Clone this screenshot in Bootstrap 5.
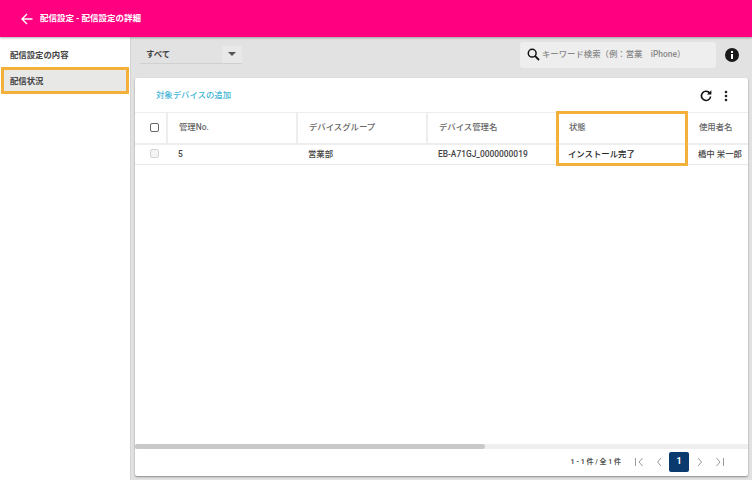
<!DOCTYPE html>
<html lang="ja">
<head>
<meta charset="UTF-8">
<title>配信設定の詳細</title>
<link href="https://cdn.jsdelivr.net/npm/bootstrap@5.3.3/dist/css/bootstrap.min.css" rel="stylesheet">
<style>
html, body { height: 480px; overflow: hidden; }
body { font-family: Roboto, "Noto Sans CJK JP", sans-serif; font-size: 8.4px; color: #333; background: #e2e2e2; }
.top-bar { height: 37px; background: #ff0080; color: #fff; font-weight: 700; font-size: 8.5px; box-shadow: 0 1px 2px rgba(0,0,0,.3); padding-left: 21px; position: relative; z-index: 2; }
.back-arrow { margin-right: 7px; }
.page-body { height: 443px; }
.side-menu { width: 131px; background: #fff; border-right: 1px solid #d4d4d4; flex: none; padding: 0 1px; }
.side-item { height: 27px; display: flex; align-items: center; padding-left: 9px; font-weight: 700; color: #444; }
.side-item.first { height: 30px; padding-top: 6px; }
.side-item.active-item { background: #e8e8e6; outline: 3px solid #f3b13c; outline-offset: -3px; width: 128px; padding-top: 1px; }
.main-area { flex: 1; min-width: 0; background: #e2e2e2; padding-right: 4px; padding-left: 4px; }
.filter-row { height: 41px; padding-bottom: 6px; }
.select-box { width: 102px; height: 18px; margin-left: 5px; padding-left: 6px; border-bottom: 1px solid #d0d0d0; font-weight: 700; color: #444; }
.select-arrow { width: 20px; height: 17px; background: #e8e8e8; }
.caret-shape { width: 0; height: 0; border-left: 4px solid transparent; border-right: 4px solid transparent; border-top: 4px solid #555; }
.search-box { width: 196px; height: 26px; background: #eeeeee; border-radius: 3px; color: #888; font-weight: 500; padding-left: 7px; gap: 2px; }
.info-btn { margin: 0 9px; width: 14px; height: 14px; }
.panel-box { height: 398px; background: #fff; border-radius: 2px; box-shadow: 0 1px 2px rgba(0,0,0,.4); position: relative; overflow: hidden; }
.panel-tools { height: 34px; padding-left: 21px; padding-right: 20px; padding-top: 1px; color: #3fb5d6; font-weight: 500; }
.tool-icons { gap: 12px; }
.grid-wrap { height: 332px; overflow: hidden; border-top: 1px solid #eee; }
.data-grid { width: 690px; table-layout: fixed; border-collapse: collapse; }
.data-grid th { height: 31px; font-weight: 500; color: #666; padding: 0 0 2px 11px; border-right: 2px solid #eee; border-bottom: 2px solid #eee; }
.data-grid td { height: 20px; font-weight: 500; color: #444; padding: 0 0 0 11px; border-bottom: 1px solid #e8e8e8; }
.data-grid th:last-child { border-right: 0; }
.data-grid .check-col { padding: 0 0 2px 15px; }
.box-check { display: block; width: 9px; height: 9px; border: 1px solid #666; border-radius: 2px; background: #fff; }
.box-check.muted-check { border-color: #d4d4d4; background: #f4f4f4; }
.status-cell { color: #222 !important; }
.scroll-track { height: 5px; background: #efefef; }
.scroll-thumb { width: 350px; height: 5px; background: #c9c9c9; border-radius: 3px; }
.panel-foot { height: 26px; font-size: 7px; font-weight: 700; color: #555; padding-right: 18px; }
.page-icon { width: 20px; height: 20px; display: flex; align-items: center; justify-content: center; }
.page-now { width: 20px; height: 20px; background: #0b3a6e; color: #fff; border-radius: 2px; font-size: 9px; font-weight: 700; display: flex; align-items: center; justify-content: center; margin: 0 1px 0 0; }
.mark-frame { position: absolute; left: 421px; top: 33px; width: 132px; height: 55px; border: 3px solid #f3b13c; pointer-events: none; }
</style>
</head>
<body>
<div class="top-bar d-flex align-items-center">
  <svg class="back-arrow" width="12" height="12" viewBox="0 0 12 12"><path d="M11.5 6H1.5M6 1L1 6l5 5" fill="none" stroke="#fff" stroke-width="1.4"/></svg>
  <span>配信設定 - 配信設定の詳細</span>
</div>
<div class="page-body d-flex">
  <div class="side-menu">
    <div class="side-item first">配信設定の内容</div>
    <div class="side-item active-item">配信状況</div>
  </div>
  <div class="main-area">
    <div class="filter-row d-flex align-items-center">
      <div class="select-box d-flex align-items-center justify-content-between">
        <span>すべて</span>
        <span class="select-arrow d-flex align-items-center justify-content-center"><span class="caret-shape"></span></span>
      </div>
      <div class="search-box d-flex align-items-center ms-auto">
        <svg width="13" height="13" viewBox="0 0 13 13"><circle cx="5.2" cy="5.2" r="3.9" fill="none" stroke="#111" stroke-width="1.5"/><path d="M8.2 8.2L12 12" stroke="#111" stroke-width="1.8"/></svg>
        <span>キーワード検索（例：営業　iPhone）</span>
      </div>
      <svg class="info-btn" viewBox="0 0 14 14"><circle cx="7" cy="7" r="7" fill="#1a1a1a"/><rect x="6" y="6" width="2" height="5" fill="#fff"/><rect x="6" y="3" width="2" height="2" fill="#fff"/></svg>
    </div>
    <div class="panel-box">
      <div class="panel-tools d-flex align-items-center justify-content-between">
        <span>対象デバイスの追加</span>
        <div class="tool-icons d-flex align-items-center">
          <svg width="12" height="12" viewBox="0 0 12 12"><path d="M9.8 3.2A4.6 4.6 0 1 0 10.6 6.5" fill="none" stroke="#111" stroke-width="1.6"/><path d="M7 4.6h4.4V.2z" fill="#111"/></svg>
          <svg width="4" height="12" viewBox="0 0 4 12"><circle cx="2" cy="2" r="1.3" fill="#222"/><circle cx="2" cy="6" r="1.3" fill="#222"/><circle cx="2" cy="10" r="1.3" fill="#222"/></svg>
        </div>
      </div>
      <div class="grid-wrap">
        <table class="data-grid">
          <colgroup><col style="width:32px"><col style="width:130px"><col style="width:130px"><col style="width:130px"><col style="width:130px"><col style="width:138px"></colgroup>
          <thead>
            <tr>
              <th class="check-col"><span class="box-check"></span></th>
              <th>管理No.</th><th>デバイスグループ</th><th>デバイス管理名</th><th>状態</th><th>使用者名</th>
            </tr>
          </thead>
          <tbody>
            <tr>
              <td class="check-col"><span class="box-check muted-check"></span></td>
              <td>5</td><td>営業部</td><td>EB-A71GJ_0000000019</td><td class="status-cell">インストール完了</td><td>橋中 栄一郎</td>
            </tr>
          </tbody>
        </table>
      </div>
      <div class="scroll-track"><div class="scroll-thumb"></div></div>
      <div class="panel-foot d-flex align-items-center justify-content-end">
        <span class="me-2">1 - 1 件 / 全 1 件</span>
        <span class="page-icon"><svg width="10" height="10" viewBox="0 0 10 10"><path d="M1.5 1v8M8.5 1L5 5l3.500 4" fill="none" stroke="#999"/></svg></span>
        <span class="page-icon"><svg width="10" height="10" viewBox="0 0 10 10"><path d="M7 1L3.500 5 7 9" fill="none" stroke="#999"/></svg></span>
        <span class="page-now">1</span>
        <span class="page-icon"><svg width="10" height="10" viewBox="0 0 10 10"><path d="M3 1l3.500 4L3 9" fill="none" stroke="#999"/></svg></span>
        <span class="page-icon"><svg width="10" height="10" viewBox="0 0 10 10"><path d="M1.500 1L5 5 1.500 9M8.500 1v8" fill="none" stroke="#999"/></svg></span>
      </div>
      <div class="mark-frame"></div>
    </div>
  </div>
</div>
<script src="https://cdn.jsdelivr.net/npm/bootstrap@5.3.3/dist/js/bootstrap.bundle.min.js"></script>
</body>
</html>
